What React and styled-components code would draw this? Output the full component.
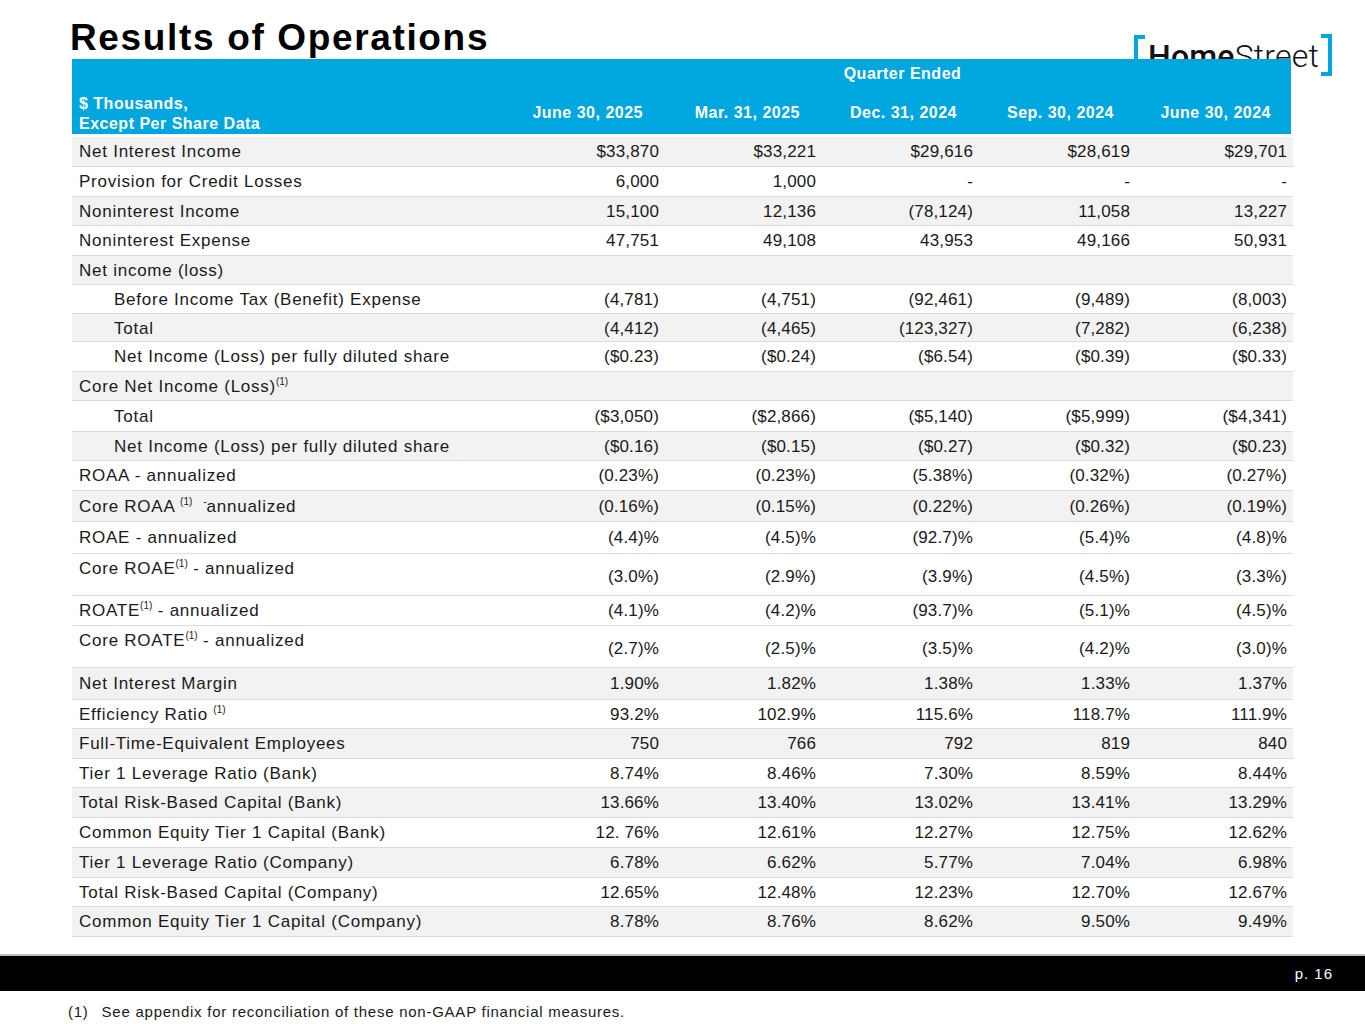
import React from 'react';
import styled, { createGlobalStyle } from 'styled-components';

const Global = createGlobalStyle`
  html, body {
    margin: 0;
    padding: 0;
    background: #ffffff;
  }
  body {
    font-family: "Liberation Sans", Arial, sans-serif;
    color: #1a1a1a;
  }
`;

const BLUE = '#00a6de';

const Page = styled.div`
  position: relative;
  width: 1365px;
  height: 1024px;
  overflow: hidden;
  display: flex;
  flex-direction: column;
`;

const TitleBar = styled.div`
  height: 59px;
  padding-left: 70px;
  display: flex;
  align-items: flex-end;
`;

const Title = styled.h1`
  margin: 0 0 3px;
  font-size: 37px;
  line-height: 37px;
  font-weight: 700;
  letter-spacing: 1.65px;
  color: #000;
`;

const Logo = styled.div`
  position: absolute;
  top: 34px;
  left: 1134px;
  display: flex;
  align-items: flex-start;
  z-index: 0;
`;

const Bracket = styled.span`
  display: block;
  width: 7px;
  height: ${p => (p.$right ? 34 : 32)}px;
  margin-top: ${p => (p.$right ? 0 : 1)}px;
  border: 4px solid ${BLUE};
  ${p => (p.$right ? 'border-left: none;' : 'border-right: none;')}
`;

const LogoText = styled.span`
  font-family: Roboto, "Liberation Sans", sans-serif;
  font-size: 32px;
  line-height: 32px;
  margin: 6px 2px 0 3px;
  color: #111;
  letter-spacing: 0.2px;
  b { font-weight: 500; }
  span { font-weight: 300; }
`;

const Table = styled.div`
  position: relative;
  z-index: 1;
  margin-left: 72px;
  width: 1221px;
  font-size: 17px;
`;

const Head = styled.div`
  width: 1219px;
  height: 75px;
  background: ${BLUE};
  color: #fff;
  font-weight: 700;
  font-size: 16px;
  letter-spacing: 0.5px;
  display: grid;
  grid-template-columns: 430px repeat(5, 157px);
  grid-template-rows: 30px 1fr;
`;

const QuarterEnded = styled.div`
  grid-column: 2 / 7;
  grid-row: 1;
  text-align: center;
  padding: 6px 0 0 16px;
`;

const Units = styled.div`
  grid-column: 1;
  grid-row: 2;
  padding: 5px 0 0 7px;
  line-height: 20px;
`;

const ColHead = styled.div`
  grid-row: 2;
  text-align: right;
  padding: 15px 16px 0 0;
`;

const Body = styled.div`
  margin-top: 3px;
`;

const Row = styled.div`
  display: grid;
  grid-template-columns: 430px repeat(5, 157px);
  height: ${p => p.$h}px;
  box-sizing: border-box;
  background: ${p => (p.$band ? '#f2f2f2' : '#ffffff')};
  border-bottom: 1px solid #dcdcdc;
`;

const Label = styled.div`
  padding-left: ${p => (p.$indent ? 42 : 7)}px;
  line-height: 29px;
  letter-spacing: 0.75px;
  white-space: nowrap;
  align-self: ${p => (p.$tall ? 'start' : 'center')};
`;

const Value = styled.div`
  text-align: right;
  align-self: center;
  line-height: 29px;
  letter-spacing: 0.15px;
  ${p => p.$tall && 'padding-top: 4px;'}
`;

const Sup = styled.sup`
  font-size: 10px;
  letter-spacing: 0;
  vertical-align: 7px;
  line-height: 0;
`;

const Footer = styled.div`
  margin-top: 17px;
  height: 35px;
  background: #000;
  border-top: 2px solid #bdbdbd;
  display: flex;
  align-items: center;
  justify-content: flex-end;
  padding-right: 32px;
`;

const PageNo = styled.span`
  color: #fff;
  font-size: 15px;
  letter-spacing: 1px;
`;

const Note = styled.div`
  display: flex;
  gap: 13px;
  padding: 12px 0 0 68px;
  font-size: 15px;
  letter-spacing: 0.75px;
  color: #1a1a1a;
`;

const one = <Sup>(1)</Sup>;

const rows = [
  { label: 'Net Interest Income', v: ['$33,870', '$33,221', '$29,616', '$28,619', '$29,701'], band: true, h: 30 },
  { label: 'Provision for Credit Losses', v: ['6,000', '1,000', '-', '-', '-'], h: 30 },
  { label: 'Noninterest Income', v: ['15,100', '12,136', '(78,124)', '11,058', '13,227'], band: true, h: 29 },
  { label: 'Noninterest Expense', v: ['47,751', '49,108', '43,953', '49,166', '50,931'], h: 30 },
  { label: 'Net income (loss)', v: [], band: true, h: 29 },
  { label: 'Before Income Tax (Benefit) Expense', indent: true, v: ['(4,781)', '(4,751)', '(92,461)', '(9,489)', '(8,003)'], h: 29 },
  { label: 'Total', indent: true, band: true, v: ['(4,412)', '(4,465)', '(123,327)', '(7,282)', '(6,238)'], h: 28 },
  { label: 'Net Income (Loss) per fully diluted share', indent: true, v: ['($0.23)', '($0.24)', '($6.54)', '($0.39)', '($0.33)'], h: 30 },
  { label: <>Core Net Income (Loss){one}</>, band: true, v: [], h: 29 },
  { label: 'Total', indent: true, v: ['($3,050)', '($2,866)', '($5,140)', '($5,999)', '($4,341)'], h: 31 },
  { label: 'Net Income (Loss) per fully diluted share', indent: true, band: true, v: ['($0.16)', '($0.15)', '($0.27)', '($0.32)', '($0.23)'], h: 29 },
  { label: 'ROAA - annualized', v: ['(0.23%)', '(0.23%)', '(5.38%)', '(0.32%)', '(0.27%)'], h: 30 },
  { label: <>Core ROAA {one}&nbsp; <Sup>-</Sup>annualized</>, band: true, v: ['(0.16%)', '(0.15%)', '(0.22%)', '(0.26%)', '(0.19%)'], h: 31 },
  { label: 'ROAE - annualized', v: ['(4.4)%', '(4.5)%', '(92.7)%', '(5.4)%', '(4.8)%'], h: 32 },
  { label: <>Core ROAE{one} - annualized</>, tall: true, v: ['(3.0%)', '(2.9%)', '(3.9%)', '(4.5%)', '(3.3%)'], h: 42 },
  { label: <>ROATE{one} - annualized</>, v: ['(4.1)%', '(4.2)%', '(93.7)%', '(5.1)%', '(4.5)%'], h: 30 },
  { label: <>Core ROATE{one} - annualized</>, tall: true, v: ['(2.7)%', '(2.5)%', '(3.5)%', '(4.2)%', '(3.0)%'], h: 42 },
  { label: 'Net Interest Margin', band: true, v: ['1.90%', '1.82%', '1.38%', '1.33%', '1.37%'], h: 32 },
  { label: <>Efficiency Ratio {one}</>, v: ['93.2%', '102.9%', '115.6%', '118.7%', '111.9%'], h: 29 },
  { label: 'Full-Time-Equivalent Employees', band: true, v: ['750', '766', '792', '819', '840'], h: 30 },
  { label: 'Tier 1 Leverage Ratio (Bank)', v: ['8.74%', '8.46%', '7.30%', '8.59%', '8.44%'], h: 29 },
  { label: 'Total Risk-Based Capital (Bank)', band: true, v: ['13.66%', '13.40%', '13.02%', '13.41%', '13.29%'], h: 30 },
  { label: 'Common Equity Tier 1 Capital (Bank)', v: ['12. 76%', '12.61%', '12.27%', '12.75%', '12.62%'], h: 30 },
  { label: 'Tier 1 Leverage Ratio (Company)', band: true, v: ['6.78%', '6.62%', '5.77%', '7.04%', '6.98%'], h: 30 },
  { label: 'Total Risk-Based Capital (Company)', v: ['12.65%', '12.48%', '12.23%', '12.70%', '12.67%'], h: 29 },
  { label: 'Common Equity Tier 1 Capital (Company)', band: true, v: ['8.78%', '8.76%', '8.62%', '9.50%', '9.49%'], h: 30 },
];

const quarters = ['June 30, 2025', 'Mar. 31, 2025', 'Dec. 31, 2024', 'Sep. 30, 2024', 'June 30, 2024'];

const App = () => {
  return (
    <Page>
      <Global />
      <TitleBar>
        <Title>Results of Operations</Title>
      </TitleBar>
      <Logo>
        <Bracket />
        <LogoText><b>Home</b><span>Street</span></LogoText>
        <Bracket $right />
      </Logo>
      <Table>
        <Head>
          <QuarterEnded>Quarter Ended</QuarterEnded>
          <Units>$ Thousands,<br />Except Per Share Data</Units>
          {quarters.map(q => <ColHead key={q}>{q}</ColHead>)}
        </Head>
        <Body>
          {rows.map((r, i) => (
            <Row key={i} $h={r.h} $band={r.band}>
              <Label $indent={r.indent} $tall={r.tall}>{r.label}</Label>
              {r.v.map((v, j) => <Value key={j} $tall={r.tall}>{v}</Value>)}
            </Row>
          ))}
        </Body>
      </Table>
      <Footer>
        <PageNo>p. 16</PageNo>
      </Footer>
      <Note>
        <span>(1)</span>
        <span>See appendix for reconciliation of these non-GAAP financial measures.</span>
      </Note>
    </Page>
  );
};

export default App;
